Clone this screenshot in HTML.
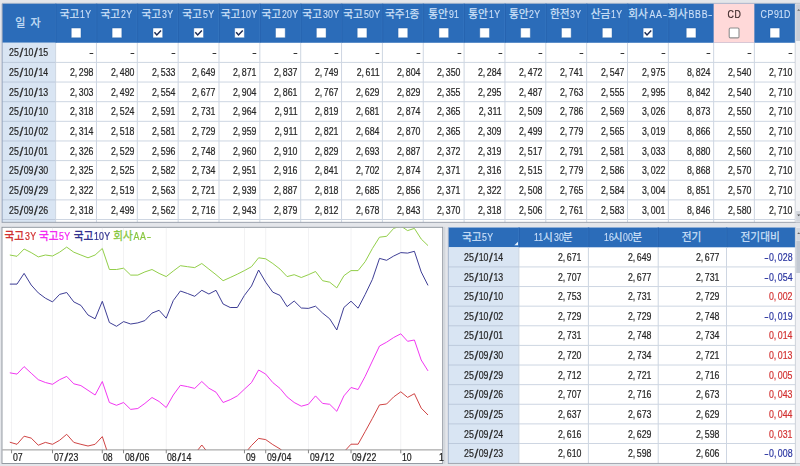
<!DOCTYPE html>
<html lang="ko"><head><meta charset="utf-8"><title>bond yields</title>
<style>
html,body{margin:0;padding:0}
body{width:800px;height:466px;overflow:hidden;position:relative;background:#E4E6EA;font-family:"Liberation Sans",sans-serif;}
#bg{position:absolute;left:0;top:0;display:block}
#tx{position:absolute;left:0;top:0;width:800px;height:466px;will-change:transform}
span{position:absolute;white-space:nowrap;line-height:12px;height:12px;font-size:11.0px;-webkit-text-stroke:0.22px}
.n{transform-origin:100% 50%;transform:scaleX(0.8);text-align:right}
.t{transform-origin:0 50%}
.hd{-webkit-text-stroke:0.1px}
i{font-style:normal;display:inline-block}
i.c{width:.45em;text-align:left}
i.s{width:.556em;text-align:center}
i.h{width:.556em;text-align:center}
i.hh{transform:scaleX(1.5)}
i.ss{transform:scale(1.55,1.14)}
i.u{padding:0 0.0475em}
svg text{font-family:"Liberation Sans","Noto Sans CJK KR",sans-serif;font-size:11px}
svg text.hh{fill:#CDE0F8;stroke:#CDE0F8;stroke-width:0.25}
</style></head>
<body>
<svg id="bg" width="800" height="466" viewBox="0 0 800 466">
<rect x="0.00" y="0.00" width="800.00" height="466.00" fill="#E4E6EA"/>
<rect x="2.20" y="2.90" width="797.80" height="0.80" fill="#9AA2AE"/>
<rect x="2.20" y="3.70" width="793.00" height="218.60" fill="#fff"/>
<rect x="2.20" y="3.70" width="793.00" height="39.06" fill="#2B6CB9"/>
<rect x="2.20" y="42.76" width="53.40" height="179.54" fill="#D9E5F3"/>
<rect x="713.65" y="3.70" width="40.70" height="39.06" fill="#FFD9D9"/>
<rect x="55.00" y="3.70" width="0.70" height="39.06" fill="#3777C1"/>
<rect x="55.70" y="3.70" width="0.70" height="39.06" fill="#2561AC"/>
<rect x="95.85" y="3.70" width="0.70" height="39.06" fill="#3777C1"/>
<rect x="96.55" y="3.70" width="0.70" height="39.06" fill="#2561AC"/>
<rect x="136.70" y="3.70" width="0.70" height="39.06" fill="#3777C1"/>
<rect x="137.40" y="3.70" width="0.70" height="39.06" fill="#2561AC"/>
<rect x="177.55" y="3.70" width="0.70" height="39.06" fill="#3777C1"/>
<rect x="178.25" y="3.70" width="0.70" height="39.06" fill="#2561AC"/>
<rect x="218.40" y="3.70" width="0.70" height="39.06" fill="#3777C1"/>
<rect x="219.10" y="3.70" width="0.70" height="39.06" fill="#2561AC"/>
<rect x="259.25" y="3.70" width="0.70" height="39.06" fill="#3777C1"/>
<rect x="259.95" y="3.70" width="0.70" height="39.06" fill="#2561AC"/>
<rect x="300.10" y="3.70" width="0.70" height="39.06" fill="#3777C1"/>
<rect x="300.80" y="3.70" width="0.70" height="39.06" fill="#2561AC"/>
<rect x="340.95" y="3.70" width="0.70" height="39.06" fill="#3777C1"/>
<rect x="341.65" y="3.70" width="0.70" height="39.06" fill="#2561AC"/>
<rect x="381.80" y="3.70" width="0.70" height="39.06" fill="#3777C1"/>
<rect x="382.50" y="3.70" width="0.70" height="39.06" fill="#2561AC"/>
<rect x="422.65" y="3.70" width="0.70" height="39.06" fill="#3777C1"/>
<rect x="423.35" y="3.70" width="0.70" height="39.06" fill="#2561AC"/>
<rect x="463.50" y="3.70" width="0.70" height="39.06" fill="#3777C1"/>
<rect x="464.20" y="3.70" width="0.70" height="39.06" fill="#2561AC"/>
<rect x="504.35" y="3.70" width="0.70" height="39.06" fill="#3777C1"/>
<rect x="505.05" y="3.70" width="0.70" height="39.06" fill="#2561AC"/>
<rect x="545.20" y="3.70" width="0.70" height="39.06" fill="#3777C1"/>
<rect x="545.90" y="3.70" width="0.70" height="39.06" fill="#2561AC"/>
<rect x="586.05" y="3.70" width="0.70" height="39.06" fill="#3777C1"/>
<rect x="586.75" y="3.70" width="0.70" height="39.06" fill="#2561AC"/>
<rect x="626.90" y="3.70" width="0.70" height="39.06" fill="#3777C1"/>
<rect x="627.60" y="3.70" width="0.70" height="39.06" fill="#2561AC"/>
<rect x="667.75" y="3.70" width="0.70" height="39.06" fill="#3777C1"/>
<rect x="668.45" y="3.70" width="0.70" height="39.06" fill="#2561AC"/>
<rect x="55.10" y="42.76" width="1.00" height="179.54" fill="#CED6E2"/>
<rect x="95.95" y="42.76" width="1.00" height="179.54" fill="#CED6E2"/>
<rect x="136.80" y="42.76" width="1.00" height="179.54" fill="#CED6E2"/>
<rect x="177.65" y="42.76" width="1.00" height="179.54" fill="#CED6E2"/>
<rect x="218.50" y="42.76" width="1.00" height="179.54" fill="#CED6E2"/>
<rect x="259.35" y="42.76" width="1.00" height="179.54" fill="#CED6E2"/>
<rect x="300.20" y="42.76" width="1.00" height="179.54" fill="#CED6E2"/>
<rect x="341.05" y="42.76" width="1.00" height="179.54" fill="#CED6E2"/>
<rect x="381.90" y="42.76" width="1.00" height="179.54" fill="#CED6E2"/>
<rect x="422.75" y="42.76" width="1.00" height="179.54" fill="#CED6E2"/>
<rect x="463.60" y="42.76" width="1.00" height="179.54" fill="#CED6E2"/>
<rect x="504.45" y="42.76" width="1.00" height="179.54" fill="#CED6E2"/>
<rect x="545.30" y="42.76" width="1.00" height="179.54" fill="#CED6E2"/>
<rect x="586.15" y="42.76" width="1.00" height="179.54" fill="#CED6E2"/>
<rect x="627.00" y="42.76" width="1.00" height="179.54" fill="#CED6E2"/>
<rect x="667.85" y="42.76" width="1.00" height="179.54" fill="#CED6E2"/>
<rect x="713.15" y="42.76" width="1.00" height="179.54" fill="#CED6E2"/>
<rect x="753.85" y="42.76" width="1.00" height="179.54" fill="#CED6E2"/>
<rect x="2.20" y="61.90" width="53.40" height="1.00" fill="#BDCADC"/>
<rect x="55.60" y="61.90" width="739.60" height="1.00" fill="#CED6E2"/>
<rect x="2.20" y="81.54" width="53.40" height="1.00" fill="#BDCADC"/>
<rect x="55.60" y="81.54" width="739.60" height="1.00" fill="#CED6E2"/>
<rect x="2.20" y="101.18" width="53.40" height="1.00" fill="#BDCADC"/>
<rect x="55.60" y="101.18" width="739.60" height="1.00" fill="#CED6E2"/>
<rect x="2.20" y="120.82" width="53.40" height="1.00" fill="#BDCADC"/>
<rect x="55.60" y="120.82" width="739.60" height="1.00" fill="#CED6E2"/>
<rect x="2.20" y="140.46" width="53.40" height="1.00" fill="#BDCADC"/>
<rect x="55.60" y="140.46" width="739.60" height="1.00" fill="#CED6E2"/>
<rect x="2.20" y="160.10" width="53.40" height="1.00" fill="#BDCADC"/>
<rect x="55.60" y="160.10" width="739.60" height="1.00" fill="#CED6E2"/>
<rect x="2.20" y="179.74" width="53.40" height="1.00" fill="#BDCADC"/>
<rect x="55.60" y="179.74" width="739.60" height="1.00" fill="#CED6E2"/>
<rect x="2.20" y="199.38" width="53.40" height="1.00" fill="#BDCADC"/>
<rect x="55.60" y="199.38" width="739.60" height="1.00" fill="#CED6E2"/>
<rect x="2.20" y="219.02" width="53.40" height="1.00" fill="#BDCADC"/>
<rect x="55.60" y="219.02" width="739.60" height="1.00" fill="#CED6E2"/>
<rect x="1.70" y="3.70" width="0.90" height="218.60" fill="#8E9DB6"/>
<rect x="1.70" y="221.85" width="798.30" height="0.90" fill="#939AA6"/>
<rect x="794.80" y="3.70" width="0.80" height="218.60" fill="#B9BFC9"/>
<rect x="795.60" y="3.70" width="4.40" height="218.60" fill="#F4F5F7"/>
<rect x="796.10" y="4.20" width="3.90" height="36.80" fill="#C9CED7"/>
<rect x="796.10" y="211.00" width="3.90" height="10.80" fill="#D3D7DE"/>
<path d="M797.2 214.5 h3 l-1.5 1.8z" fill="#555"/>
<path d="M797.2 10.8 h3 l-1.5 -1.8z" fill="#666"/>
<text class="hh" x="59.68" y="17.6" textLength="19.6" lengthAdjust="spacingAndGlyphs">국고</text>
<rect x="71.28" y="28.10" width="9.70" height="9.70" rx="0.6" fill="#fff" stroke="#1F5BA3" stroke-width="0.4"/>
<text class="hh" x="100.53" y="17.6" textLength="19.6" lengthAdjust="spacingAndGlyphs">국고</text>
<rect x="112.12" y="28.10" width="9.70" height="9.70" rx="0.6" fill="#fff" stroke="#1F5BA3" stroke-width="0.4"/>
<text class="hh" x="141.38" y="17.6" textLength="19.6" lengthAdjust="spacingAndGlyphs">국고</text>
<rect x="152.98" y="28.10" width="9.70" height="9.70" rx="0.6" fill="#fff" stroke="#1F5BA3" stroke-width="0.4"/>
<path d="M154.93 32.85 L156.83 34.95 L160.53 31.05" fill="none" stroke="#1B2B55" stroke-width="1.45" stroke-linecap="square" stroke-linejoin="miter"/>
<text class="hh" x="182.23" y="17.6" textLength="19.6" lengthAdjust="spacingAndGlyphs">국고</text>
<rect x="193.82" y="28.10" width="9.70" height="9.70" rx="0.6" fill="#fff" stroke="#1F5BA3" stroke-width="0.4"/>
<path d="M195.77 32.85 L197.67 34.95 L201.37 31.05" fill="none" stroke="#1B2B55" stroke-width="1.45" stroke-linecap="square" stroke-linejoin="miter"/>
<text class="hh" x="220.63" y="17.6" textLength="19.6" lengthAdjust="spacingAndGlyphs">국고</text>
<rect x="234.68" y="28.10" width="9.70" height="9.70" rx="0.6" fill="#fff" stroke="#1F5BA3" stroke-width="0.4"/>
<path d="M236.62 32.85 L238.53 34.95 L242.22 31.05" fill="none" stroke="#1B2B55" stroke-width="1.45" stroke-linecap="square" stroke-linejoin="miter"/>
<text class="hh" x="261.48" y="17.6" textLength="19.6" lengthAdjust="spacingAndGlyphs">국고</text>
<rect x="275.53" y="28.10" width="9.70" height="9.70" rx="0.6" fill="#fff" stroke="#1F5BA3" stroke-width="0.4"/>
<text class="hh" x="302.33" y="17.6" textLength="19.6" lengthAdjust="spacingAndGlyphs">국고</text>
<rect x="316.38" y="28.10" width="9.70" height="9.70" rx="0.6" fill="#fff" stroke="#1F5BA3" stroke-width="0.4"/>
<text class="hh" x="343.18" y="17.6" textLength="19.6" lengthAdjust="spacingAndGlyphs">국고</text>
<rect x="357.23" y="28.10" width="9.70" height="9.70" rx="0.6" fill="#fff" stroke="#1F5BA3" stroke-width="0.4"/>
<text class="hh" x="384.93" y="17.6" textLength="19.6" lengthAdjust="spacingAndGlyphs">국주</text>
<text class="hh" x="409.42" y="17.6" textLength="9.8" lengthAdjust="spacingAndGlyphs">종</text>
<rect x="398.08" y="28.10" width="9.70" height="9.70" rx="0.6" fill="#fff" stroke="#1F5BA3" stroke-width="0.4"/>
<text class="hh" x="428.23" y="17.6" textLength="19.6" lengthAdjust="spacingAndGlyphs">통안</text>
<rect x="438.93" y="28.10" width="9.70" height="9.70" rx="0.6" fill="#fff" stroke="#1F5BA3" stroke-width="0.4"/>
<text class="hh" x="468.18" y="17.6" textLength="19.6" lengthAdjust="spacingAndGlyphs">통안</text>
<rect x="479.78" y="28.10" width="9.70" height="9.70" rx="0.6" fill="#fff" stroke="#1F5BA3" stroke-width="0.4"/>
<text class="hh" x="509.03" y="17.6" textLength="19.6" lengthAdjust="spacingAndGlyphs">통안</text>
<rect x="520.62" y="28.10" width="9.70" height="9.70" rx="0.6" fill="#fff" stroke="#1F5BA3" stroke-width="0.4"/>
<text class="hh" x="549.88" y="17.6" textLength="19.6" lengthAdjust="spacingAndGlyphs">한전</text>
<rect x="561.48" y="28.10" width="9.70" height="9.70" rx="0.6" fill="#fff" stroke="#1F5BA3" stroke-width="0.4"/>
<text class="hh" x="590.73" y="17.6" textLength="19.6" lengthAdjust="spacingAndGlyphs">산금</text>
<rect x="602.33" y="28.10" width="9.70" height="9.70" rx="0.6" fill="#fff" stroke="#1F5BA3" stroke-width="0.4"/>
<text class="hh" x="628.22" y="17.6" textLength="19.6" lengthAdjust="spacingAndGlyphs">회사</text>
<rect x="643.17" y="28.10" width="9.70" height="9.70" rx="0.6" fill="#fff" stroke="#1F5BA3" stroke-width="0.4"/>
<path d="M645.12 32.85 L647.02 34.95 L650.73 31.05" fill="none" stroke="#1B2B55" stroke-width="1.45" stroke-linecap="square" stroke-linejoin="miter"/>
<text class="hh" x="667.95" y="17.6" textLength="19.6" lengthAdjust="spacingAndGlyphs">회사</text>
<rect x="686.25" y="28.10" width="9.70" height="9.70" rx="0.6" fill="#fff" stroke="#1F5BA3" stroke-width="0.4"/>
<rect x="729.20" y="28.05" width="9.80" height="9.80" rx="1.2" fill="#fff" stroke="#8E8E8E" stroke-width="1.1"/>
<rect x="770.03" y="28.10" width="9.70" height="9.70" rx="0.6" fill="#fff" stroke="#1F5BA3" stroke-width="0.4"/>
<text class="hh" x="15.25" y="27.4" textLength="25.4" lengthAdjust="spacing" xml:space="preserve">일 자</text>
<rect x="2.00" y="227.30" width="440.70" height="236.20" fill="#fff" stroke="#8C929B" stroke-width="0.9"/>
<rect x="443.20" y="226.90" width="2.10" height="237.00" fill="#D3D7DD"/>
<rect x="11.15" y="227.90" width="0.90" height="222.00" fill="#F0F0F2"/>
<rect x="52.05" y="227.90" width="0.90" height="222.00" fill="#F0F0F2"/>
<rect x="101.80" y="227.90" width="0.90" height="222.00" fill="#F0F0F2"/>
<rect x="123.13" y="227.90" width="0.90" height="222.00" fill="#F0F0F2"/>
<rect x="165.78" y="227.90" width="0.90" height="222.00" fill="#F0F0F2"/>
<rect x="243.96" y="227.90" width="0.90" height="222.00" fill="#F0F0F2"/>
<rect x="265.29" y="227.90" width="0.90" height="222.00" fill="#F0F0F2"/>
<rect x="307.94" y="227.90" width="0.90" height="222.00" fill="#F0F0F2"/>
<rect x="350.58" y="227.90" width="0.90" height="222.00" fill="#F0F0F2"/>
<rect x="400.34" y="227.90" width="0.90" height="222.00" fill="#F0F0F2"/>
<rect x="11.15" y="449.90" width="0.90" height="3.40" fill="#777"/>
<rect x="52.05" y="449.90" width="0.90" height="3.40" fill="#777"/>
<rect x="101.80" y="449.90" width="0.90" height="3.40" fill="#777"/>
<rect x="123.13" y="449.90" width="0.90" height="3.40" fill="#777"/>
<rect x="165.78" y="449.90" width="0.90" height="3.40" fill="#777"/>
<rect x="243.96" y="449.90" width="0.90" height="3.40" fill="#777"/>
<rect x="265.29" y="449.90" width="0.90" height="3.40" fill="#777"/>
<rect x="307.94" y="449.90" width="0.90" height="3.40" fill="#777"/>
<rect x="350.58" y="449.90" width="0.90" height="3.40" fill="#777"/>
<rect x="400.34" y="449.90" width="0.90" height="3.40" fill="#777"/>
<clipPath id="cc"><rect x="2.5" y="227.8" width="439.7" height="222.09999999999997"/></clipPath>
<polyline clip-path="url(#cc)" points="9.8,255.0 17.0,256.3 24.1,249.0 31.2,252.6 38.3,256.9 45.4,255.0 52.5,256.0 59.6,252.2 66.7,247.1 73.8,252.2 80.9,255.0 88.0,257.8 95.1,255.0 102.3,248.5 109.4,269.5 116.5,269.5 123.6,268.2 130.7,275.1 137.8,275.1 144.9,271.9 152.0,269.5 159.1,273.4 166.2,276.6 173.3,271.0 180.4,265.7 187.5,266.7 194.7,267.6 201.8,263.5 208.9,269.1 216.0,274.7 223.1,280.7 230.2,277.5 237.3,274.2 244.4,270.6 251.5,266.7 258.6,257.8 265.7,258.8 272.8,263.5 280.0,269.1 287.1,276.6 294.2,274.7 301.3,277.5 308.4,274.7 315.5,271.5 322.6,280.7 329.7,282.2 336.8,287.9 343.9,275.7 351.0,270.6 358.1,270.6 365.2,261.6 372.4,248.5 379.5,237.2 386.6,236.3 393.7,228.4 400.8,226.0 407.6,230.6 414.4,228.4 421.2,239.0 428.0,245.6" fill="none" stroke="#8CCB3F" stroke-width="0.95" stroke-linejoin="round"/>
<polyline clip-path="url(#cc)" points="9.8,284.1 17.0,284.1 24.1,273.4 31.2,285.0 38.3,292.9 45.4,298.2 52.5,301.9 59.6,294.4 66.7,292.5 73.8,301.9 80.9,305.4 88.0,315.0 95.1,318.8 102.3,301.3 109.4,322.5 116.5,326.3 123.6,321.6 130.7,324.0 137.8,322.9 144.9,320.6 152.0,313.1 159.1,310.3 166.2,318.2 173.3,300.5 180.4,291.0 187.5,293.5 194.7,296.3 201.8,290.3 208.9,294.0 216.0,290.3 223.1,304.0 230.2,307.5 237.3,307.5 244.4,295.4 251.5,286.0 258.6,270.0 265.7,282.2 272.8,292.2 280.0,295.4 287.1,306.6 294.2,301.0 301.3,308.0 308.4,308.4 315.5,306.2 322.6,313.1 329.7,318.8 336.8,330.0 343.9,307.5 351.0,301.2 358.1,308.2 365.2,294.4 372.4,279.4 379.5,258.4 386.6,260.3 393.7,256.0 400.8,252.6 407.6,253.1 414.4,251.3 421.2,271.9 428.0,285.4" fill="none" stroke="#34348F" stroke-width="0.95" stroke-linejoin="round"/>
<polyline clip-path="url(#cc)" points="9.8,372.8 17.0,374.1 24.1,366.6 31.2,373.2 38.3,379.7 45.4,382.5 52.5,384.3 59.6,379.7 66.7,376.4 73.8,383.8 80.9,385.6 88.0,390.3 95.1,395.0 102.3,381.5 109.4,402.5 116.5,405.3 123.6,402.5 130.7,409.4 137.8,408.5 144.9,403.4 152.0,397.5 159.1,401.5 166.2,407.5 173.3,395.0 180.4,385.3 187.5,386.6 194.7,388.4 201.8,381.5 208.9,388.2 216.0,392.2 223.1,402.5 230.2,399.7 237.3,395.9 244.4,389.2 251.5,382.6 258.6,370.0 265.7,374.1 272.8,382.6 280.0,388.4 287.1,396.9 294.2,402.5 301.3,406.2 308.4,404.3 315.5,395.9 322.6,403.4 329.7,404.3 336.8,411.3 343.9,395.9 351.0,387.5 358.1,389.5 365.2,376.3 372.4,361.0 379.5,346.0 386.6,342.2 393.7,337.5 400.8,333.8 407.6,341.3 414.4,340.0 421.2,360.0 428.0,370.9" fill="none" stroke="#F02CF0" stroke-width="0.95" stroke-linejoin="round"/>
<polyline clip-path="url(#cc)" points="9.8,442.2 17.0,444.3 24.1,436.2 31.2,438.1 38.3,445.2 45.4,442.4 52.5,444.3 59.6,440.3 66.7,434.3 73.8,442.4 80.9,444.3 88.0,446.0 95.1,444.3 102.3,436.6 109.4,458.0 116.5,458.0 123.6,458.0 130.7,458.0 137.8,458.0 144.9,458.0 152.0,458.0 159.1,458.0 166.2,458.0 173.3,458.0 180.4,458.0 187.5,458.0 194.7,454.0 201.8,445.0 208.9,454.0 216.0,458.0 223.1,458.0 230.2,458.0 237.3,458.0 244.4,454.0 251.5,445.5 258.6,438.4 265.7,439.6 272.8,444.6 280.0,448.9 287.1,455.0 294.2,458.0 301.3,458.0 308.4,458.0 315.5,458.0 322.6,458.0 329.7,458.0 336.8,458.0 343.9,452.0 351.0,444.2 358.1,444.2 365.2,431.5 372.4,418.4 379.5,404.9 386.6,404.0 393.7,396.9 400.8,391.8 407.6,397.4 414.4,393.7 421.2,408.1 428.0,415.0" fill="none" stroke="#CC3A3A" stroke-width="0.95" stroke-linejoin="round"/>
<rect x="2.40" y="449.45" width="439.90" height="0.90" fill="#8A8A8A"/>
<text x="4.45" y="239.7" textLength="19.6" lengthAdjust="spacingAndGlyphs" fill="#D02A2A" stroke="#D02A2A" stroke-width="0.3">국고</text>
<text x="39.05" y="239.7" textLength="19.6" lengthAdjust="spacingAndGlyphs" fill="#F31FF3" stroke="#F31FF3" stroke-width="0.3">국고</text>
<text x="73.65" y="239.7" textLength="19.6" lengthAdjust="spacingAndGlyphs" fill="#2B2B8C" stroke="#2B2B8C" stroke-width="0.3">국고</text>
<text x="113.14" y="239.7" textLength="19.6" lengthAdjust="spacingAndGlyphs" fill="#86C63C" stroke="#86C63C" stroke-width="0.3">회사</text>
<rect x="448.30" y="227.50" width="347.00" height="235.90" fill="#fff"/>
<rect x="448.30" y="227.50" width="347.00" height="19.80" fill="#2B6CB9"/>
<rect x="448.30" y="247.30" width="70.60" height="216.10" fill="#D9E5F3"/>
<rect x="518.30" y="227.50" width="0.70" height="19.80" fill="#3777C1"/>
<rect x="519.00" y="227.50" width="0.70" height="19.80" fill="#2561AC"/>
<rect x="518.40" y="247.30" width="1.00" height="216.10" fill="#CED6E2"/>
<rect x="587.80" y="227.50" width="0.70" height="19.80" fill="#3777C1"/>
<rect x="588.50" y="227.50" width="0.70" height="19.80" fill="#2561AC"/>
<rect x="587.90" y="247.30" width="1.00" height="216.10" fill="#CED6E2"/>
<rect x="657.60" y="227.50" width="0.70" height="19.80" fill="#3777C1"/>
<rect x="658.30" y="227.50" width="0.70" height="19.80" fill="#2561AC"/>
<rect x="657.70" y="247.30" width="1.00" height="216.10" fill="#CED6E2"/>
<rect x="725.90" y="227.50" width="0.70" height="19.80" fill="#3777C1"/>
<rect x="726.60" y="227.50" width="0.70" height="19.80" fill="#2561AC"/>
<rect x="726.00" y="247.30" width="1.00" height="216.10" fill="#CED6E2"/>
<rect x="448.30" y="266.42" width="70.60" height="1.00" fill="#BDCADC"/>
<rect x="518.90" y="266.42" width="276.40" height="1.00" fill="#CED6E2"/>
<rect x="448.30" y="286.04" width="70.60" height="1.00" fill="#BDCADC"/>
<rect x="518.90" y="286.04" width="276.40" height="1.00" fill="#CED6E2"/>
<rect x="448.30" y="305.66" width="70.60" height="1.00" fill="#BDCADC"/>
<rect x="518.90" y="305.66" width="276.40" height="1.00" fill="#CED6E2"/>
<rect x="448.30" y="325.28" width="70.60" height="1.00" fill="#BDCADC"/>
<rect x="518.90" y="325.28" width="276.40" height="1.00" fill="#CED6E2"/>
<rect x="448.30" y="344.90" width="70.60" height="1.00" fill="#BDCADC"/>
<rect x="518.90" y="344.90" width="276.40" height="1.00" fill="#CED6E2"/>
<rect x="448.30" y="364.52" width="70.60" height="1.00" fill="#BDCADC"/>
<rect x="518.90" y="364.52" width="276.40" height="1.00" fill="#CED6E2"/>
<rect x="448.30" y="384.14" width="70.60" height="1.00" fill="#BDCADC"/>
<rect x="518.90" y="384.14" width="276.40" height="1.00" fill="#CED6E2"/>
<rect x="448.30" y="403.76" width="70.60" height="1.00" fill="#BDCADC"/>
<rect x="518.90" y="403.76" width="276.40" height="1.00" fill="#CED6E2"/>
<rect x="448.30" y="423.38" width="70.60" height="1.00" fill="#BDCADC"/>
<rect x="518.90" y="423.38" width="276.40" height="1.00" fill="#CED6E2"/>
<rect x="448.30" y="443.00" width="70.60" height="1.00" fill="#BDCADC"/>
<rect x="518.90" y="443.00" width="276.40" height="1.00" fill="#CED6E2"/>
<rect x="447.85" y="227.50" width="0.90" height="235.90" fill="#9FB0C8"/>
<rect x="794.90" y="227.50" width="0.80" height="235.90" fill="#B9BFC9"/>
<rect x="447.90" y="462.95" width="352.10" height="0.90" fill="#9AA0AA"/>
<rect x="795.70" y="227.50" width="4.30" height="235.90" fill="#F1F2F5"/>
<rect x="796.20" y="227.90" width="3.80" height="12.10" fill="#D3D7DE"/>
<rect x="796.20" y="240.50" width="3.80" height="32.50" fill="#C3C9D3"/>
<path d="M797.2 234 h3 l-1.5 -1.8z" fill="#666"/>
<path d="M518.00 241.70 v3.5 h-3.6z" fill="#EAF4FF"/>
<text class="hh" x="461.95" y="241.3" textLength="19.6" lengthAdjust="spacingAndGlyphs">국고</text>
<text class="hh" x="543.10" y="241.3" textLength="9.8" lengthAdjust="spacingAndGlyphs">시</text>
<text class="hh" x="562.69" y="241.3" textLength="9.8" lengthAdjust="spacingAndGlyphs">분</text>
<text class="hh" x="612.75" y="241.3" textLength="9.8" lengthAdjust="spacingAndGlyphs">시</text>
<text class="hh" x="632.34" y="241.3" textLength="9.8" lengthAdjust="spacingAndGlyphs">분</text>
<text class="hh" x="681.80" y="241.3" textLength="19.6" lengthAdjust="spacingAndGlyphs">전기</text>
<text class="hh" x="740.55" y="241.3" textLength="39.2" lengthAdjust="spacingAndGlyphs">전기대비</text>
</svg>
<div id="tx">
<span class="t hd" style="left:80.03px;top:7.50px;color:#CDE0F8;font-size:11.0px;transform:scaleX(0.8)">1<i class="u">Y</i></span>
<span class="t hd" style="left:120.88px;top:7.50px;color:#CDE0F8;font-size:11.0px;transform:scaleX(0.8)">2<i class="u">Y</i></span>
<span class="t hd" style="left:161.73px;top:7.50px;color:#CDE0F8;font-size:11.0px;transform:scaleX(0.8)">3<i class="u">Y</i></span>
<span class="t hd" style="left:202.58px;top:7.50px;color:#CDE0F8;font-size:11.0px;transform:scaleX(0.8)">5<i class="u">Y</i></span>
<span class="t hd" style="left:240.98px;top:7.50px;color:#CDE0F8;font-size:11.0px;transform:scaleX(0.8)">10<i class="u">Y</i></span>
<span class="t hd" style="left:281.83px;top:7.50px;color:#CDE0F8;font-size:11.0px;transform:scaleX(0.8)">20<i class="u">Y</i></span>
<span class="t hd" style="left:322.68px;top:7.50px;color:#CDE0F8;font-size:11.0px;transform:scaleX(0.8)">30<i class="u">Y</i></span>
<span class="t hd" style="left:363.53px;top:7.50px;color:#CDE0F8;font-size:11.0px;transform:scaleX(0.8)">50<i class="u">Y</i></span>
<span class="t hd" style="left:405.28px;top:7.50px;color:#CDE0F8;font-size:11.0px;transform:scaleX(0.8)">1</span>
<span class="t hd" style="left:448.58px;top:7.50px;color:#CDE0F8;font-size:11.0px;transform:scaleX(0.8)">91</span>
<span class="t hd" style="left:488.53px;top:7.50px;color:#CDE0F8;font-size:11.0px;transform:scaleX(0.8)">1<i class="u">Y</i></span>
<span class="t hd" style="left:529.38px;top:7.50px;color:#CDE0F8;font-size:11.0px;transform:scaleX(0.8)">2<i class="u">Y</i></span>
<span class="t hd" style="left:570.23px;top:7.50px;color:#CDE0F8;font-size:11.0px;transform:scaleX(0.8)">3<i class="u">Y</i></span>
<span class="t hd" style="left:611.08px;top:7.50px;color:#CDE0F8;font-size:11.0px;transform:scaleX(0.8)">1<i class="u">Y</i></span>
<span class="t hd" style="left:648.57px;top:7.50px;color:#CDE0F8;font-size:11.0px;transform:scaleX(0.8)"><i class="u">A</i><i class="u">A</i><i class="h"><i class="hh">-</i></i></span>
<span class="t hd" style="left:688.30px;top:7.50px;color:#CDE0F8;font-size:11.0px;transform:scaleX(0.8)"><i class="u">B</i><i class="u">B</i><i class="u">B</i><i class="h"><i class="hh">-</i></i></span>
<span class="t" style="left:726.81px;top:7.50px;color:#3A2626;font-size:11.0px;transform:scaleX(0.8)"><i class="u">C</i><i class="u">D</i></span>
<span class="t hd" style="left:760.34px;top:7.50px;color:#CDE0F8;font-size:11.0px;transform:scaleX(0.8)"><i class="u">C</i><i class="u">P</i>91<i class="u">D</i></span>
<span class="t" style="left:9.40px;top:46.48px;color:#262626;font-size:11.0px;transform:scaleX(0.8)">25<i class="s"><i class="ss">/</i></i>10<i class="s"><i class="ss">/</i></i>15</span>
<span class="n" style="right:705.85px;top:45.98px;color:#262626"><i class="h"><i class="hh">-</i></i></span>
<span class="n" style="right:665.00px;top:45.98px;color:#262626"><i class="h"><i class="hh">-</i></i></span>
<span class="n" style="right:624.15px;top:45.98px;color:#262626"><i class="h"><i class="hh">-</i></i></span>
<span class="n" style="right:583.30px;top:45.98px;color:#262626"><i class="h"><i class="hh">-</i></i></span>
<span class="n" style="right:542.45px;top:45.98px;color:#262626"><i class="h"><i class="hh">-</i></i></span>
<span class="n" style="right:501.60px;top:45.98px;color:#262626"><i class="h"><i class="hh">-</i></i></span>
<span class="n" style="right:460.75px;top:45.98px;color:#262626"><i class="h"><i class="hh">-</i></i></span>
<span class="n" style="right:419.90px;top:45.98px;color:#262626"><i class="h"><i class="hh">-</i></i></span>
<span class="n" style="right:379.05px;top:45.98px;color:#262626"><i class="h"><i class="hh">-</i></i></span>
<span class="n" style="right:338.20px;top:45.98px;color:#262626"><i class="h"><i class="hh">-</i></i></span>
<span class="n" style="right:297.35px;top:45.98px;color:#262626"><i class="h"><i class="hh">-</i></i></span>
<span class="n" style="right:256.50px;top:45.98px;color:#262626"><i class="h"><i class="hh">-</i></i></span>
<span class="n" style="right:215.65px;top:45.98px;color:#262626"><i class="h"><i class="hh">-</i></i></span>
<span class="n" style="right:174.80px;top:45.98px;color:#262626"><i class="h"><i class="hh">-</i></i></span>
<span class="n" style="right:133.95px;top:45.98px;color:#262626"><i class="h"><i class="hh">-</i></i></span>
<span class="n" style="right:88.65px;top:45.98px;color:#262626"><i class="h"><i class="hh">-</i></i></span>
<span class="n" style="right:47.95px;top:45.98px;color:#262626"><i class="h"><i class="hh">-</i></i></span>
<span class="n" style="right:7.10px;top:45.98px;color:#262626"><i class="h"><i class="hh">-</i></i></span>
<span class="t" style="left:9.40px;top:66.12px;color:#262626;font-size:11.0px;transform:scaleX(0.8)">25<i class="s"><i class="ss">/</i></i>10<i class="s"><i class="ss">/</i></i>14</span>
<span class="n" style="right:706.75px;top:66.12px;color:#262626">2<i class="c">,</i>298</span>
<span class="n" style="right:665.90px;top:66.12px;color:#262626">2<i class="c">,</i>480</span>
<span class="n" style="right:625.05px;top:66.12px;color:#262626">2<i class="c">,</i>533</span>
<span class="n" style="right:584.20px;top:66.12px;color:#262626">2<i class="c">,</i>649</span>
<span class="n" style="right:543.35px;top:66.12px;color:#262626">2<i class="c">,</i>871</span>
<span class="n" style="right:502.50px;top:66.12px;color:#262626">2<i class="c">,</i>837</span>
<span class="n" style="right:461.65px;top:66.12px;color:#262626">2<i class="c">,</i>749</span>
<span class="n" style="right:420.80px;top:66.12px;color:#262626">2<i class="c">,</i>611</span>
<span class="n" style="right:379.95px;top:66.12px;color:#262626">2<i class="c">,</i>804</span>
<span class="n" style="right:339.10px;top:66.12px;color:#262626">2<i class="c">,</i>350</span>
<span class="n" style="right:298.25px;top:66.12px;color:#262626">2<i class="c">,</i>284</span>
<span class="n" style="right:257.40px;top:66.12px;color:#262626">2<i class="c">,</i>472</span>
<span class="n" style="right:216.55px;top:66.12px;color:#262626">2<i class="c">,</i>741</span>
<span class="n" style="right:175.70px;top:66.12px;color:#262626">2<i class="c">,</i>547</span>
<span class="n" style="right:134.85px;top:66.12px;color:#262626">2<i class="c">,</i>975</span>
<span class="n" style="right:89.55px;top:66.12px;color:#262626">8<i class="c">,</i>824</span>
<span class="n" style="right:48.85px;top:66.12px;color:#262626">2<i class="c">,</i>540</span>
<span class="n" style="right:8.00px;top:66.12px;color:#262626">2<i class="c">,</i>710</span>
<span class="t" style="left:9.40px;top:85.76px;color:#262626;font-size:11.0px;transform:scaleX(0.8)">25<i class="s"><i class="ss">/</i></i>10<i class="s"><i class="ss">/</i></i>13</span>
<span class="n" style="right:706.75px;top:85.76px;color:#262626">2<i class="c">,</i>303</span>
<span class="n" style="right:665.90px;top:85.76px;color:#262626">2<i class="c">,</i>492</span>
<span class="n" style="right:625.05px;top:85.76px;color:#262626">2<i class="c">,</i>554</span>
<span class="n" style="right:584.20px;top:85.76px;color:#262626">2<i class="c">,</i>677</span>
<span class="n" style="right:543.35px;top:85.76px;color:#262626">2<i class="c">,</i>904</span>
<span class="n" style="right:502.50px;top:85.76px;color:#262626">2<i class="c">,</i>861</span>
<span class="n" style="right:461.65px;top:85.76px;color:#262626">2<i class="c">,</i>767</span>
<span class="n" style="right:420.80px;top:85.76px;color:#262626">2<i class="c">,</i>629</span>
<span class="n" style="right:379.95px;top:85.76px;color:#262626">2<i class="c">,</i>829</span>
<span class="n" style="right:339.10px;top:85.76px;color:#262626">2<i class="c">,</i>355</span>
<span class="n" style="right:298.25px;top:85.76px;color:#262626">2<i class="c">,</i>295</span>
<span class="n" style="right:257.40px;top:85.76px;color:#262626">2<i class="c">,</i>487</span>
<span class="n" style="right:216.55px;top:85.76px;color:#262626">2<i class="c">,</i>763</span>
<span class="n" style="right:175.70px;top:85.76px;color:#262626">2<i class="c">,</i>555</span>
<span class="n" style="right:134.85px;top:85.76px;color:#262626">2<i class="c">,</i>995</span>
<span class="n" style="right:89.55px;top:85.76px;color:#262626">8<i class="c">,</i>842</span>
<span class="n" style="right:48.85px;top:85.76px;color:#262626">2<i class="c">,</i>540</span>
<span class="n" style="right:8.00px;top:85.76px;color:#262626">2<i class="c">,</i>710</span>
<span class="t" style="left:9.40px;top:105.40px;color:#262626;font-size:11.0px;transform:scaleX(0.8)">25<i class="s"><i class="ss">/</i></i>10<i class="s"><i class="ss">/</i></i>10</span>
<span class="n" style="right:706.75px;top:105.40px;color:#262626">2<i class="c">,</i>318</span>
<span class="n" style="right:665.90px;top:105.40px;color:#262626">2<i class="c">,</i>524</span>
<span class="n" style="right:625.05px;top:105.40px;color:#262626">2<i class="c">,</i>591</span>
<span class="n" style="right:584.20px;top:105.40px;color:#262626">2<i class="c">,</i>731</span>
<span class="n" style="right:543.35px;top:105.40px;color:#262626">2<i class="c">,</i>964</span>
<span class="n" style="right:502.50px;top:105.40px;color:#262626">2<i class="c">,</i>911</span>
<span class="n" style="right:461.65px;top:105.40px;color:#262626">2<i class="c">,</i>819</span>
<span class="n" style="right:420.80px;top:105.40px;color:#262626">2<i class="c">,</i>681</span>
<span class="n" style="right:379.95px;top:105.40px;color:#262626">2<i class="c">,</i>874</span>
<span class="n" style="right:339.10px;top:105.40px;color:#262626">2<i class="c">,</i>365</span>
<span class="n" style="right:298.25px;top:105.40px;color:#262626">2<i class="c">,</i>311</span>
<span class="n" style="right:257.40px;top:105.40px;color:#262626">2<i class="c">,</i>509</span>
<span class="n" style="right:216.55px;top:105.40px;color:#262626">2<i class="c">,</i>786</span>
<span class="n" style="right:175.70px;top:105.40px;color:#262626">2<i class="c">,</i>569</span>
<span class="n" style="right:134.85px;top:105.40px;color:#262626">3<i class="c">,</i>026</span>
<span class="n" style="right:89.55px;top:105.40px;color:#262626">8<i class="c">,</i>873</span>
<span class="n" style="right:48.85px;top:105.40px;color:#262626">2<i class="c">,</i>550</span>
<span class="n" style="right:8.00px;top:105.40px;color:#262626">2<i class="c">,</i>710</span>
<span class="t" style="left:9.40px;top:125.04px;color:#262626;font-size:11.0px;transform:scaleX(0.8)">25<i class="s"><i class="ss">/</i></i>10<i class="s"><i class="ss">/</i></i>02</span>
<span class="n" style="right:706.75px;top:125.04px;color:#262626">2<i class="c">,</i>314</span>
<span class="n" style="right:665.90px;top:125.04px;color:#262626">2<i class="c">,</i>518</span>
<span class="n" style="right:625.05px;top:125.04px;color:#262626">2<i class="c">,</i>581</span>
<span class="n" style="right:584.20px;top:125.04px;color:#262626">2<i class="c">,</i>729</span>
<span class="n" style="right:543.35px;top:125.04px;color:#262626">2<i class="c">,</i>959</span>
<span class="n" style="right:502.50px;top:125.04px;color:#262626">2<i class="c">,</i>911</span>
<span class="n" style="right:461.65px;top:125.04px;color:#262626">2<i class="c">,</i>821</span>
<span class="n" style="right:420.80px;top:125.04px;color:#262626">2<i class="c">,</i>684</span>
<span class="n" style="right:379.95px;top:125.04px;color:#262626">2<i class="c">,</i>870</span>
<span class="n" style="right:339.10px;top:125.04px;color:#262626">2<i class="c">,</i>365</span>
<span class="n" style="right:298.25px;top:125.04px;color:#262626">2<i class="c">,</i>309</span>
<span class="n" style="right:257.40px;top:125.04px;color:#262626">2<i class="c">,</i>499</span>
<span class="n" style="right:216.55px;top:125.04px;color:#262626">2<i class="c">,</i>779</span>
<span class="n" style="right:175.70px;top:125.04px;color:#262626">2<i class="c">,</i>565</span>
<span class="n" style="right:134.85px;top:125.04px;color:#262626">3<i class="c">,</i>019</span>
<span class="n" style="right:89.55px;top:125.04px;color:#262626">8<i class="c">,</i>866</span>
<span class="n" style="right:48.85px;top:125.04px;color:#262626">2<i class="c">,</i>550</span>
<span class="n" style="right:8.00px;top:125.04px;color:#262626">2<i class="c">,</i>710</span>
<span class="t" style="left:9.40px;top:144.68px;color:#262626;font-size:11.0px;transform:scaleX(0.8)">25<i class="s"><i class="ss">/</i></i>10<i class="s"><i class="ss">/</i></i>01</span>
<span class="n" style="right:706.75px;top:144.68px;color:#262626">2<i class="c">,</i>326</span>
<span class="n" style="right:665.90px;top:144.68px;color:#262626">2<i class="c">,</i>529</span>
<span class="n" style="right:625.05px;top:144.68px;color:#262626">2<i class="c">,</i>596</span>
<span class="n" style="right:584.20px;top:144.68px;color:#262626">2<i class="c">,</i>748</span>
<span class="n" style="right:543.35px;top:144.68px;color:#262626">2<i class="c">,</i>960</span>
<span class="n" style="right:502.50px;top:144.68px;color:#262626">2<i class="c">,</i>910</span>
<span class="n" style="right:461.65px;top:144.68px;color:#262626">2<i class="c">,</i>829</span>
<span class="n" style="right:420.80px;top:144.68px;color:#262626">2<i class="c">,</i>693</span>
<span class="n" style="right:379.95px;top:144.68px;color:#262626">2<i class="c">,</i>887</span>
<span class="n" style="right:339.10px;top:144.68px;color:#262626">2<i class="c">,</i>372</span>
<span class="n" style="right:298.25px;top:144.68px;color:#262626">2<i class="c">,</i>319</span>
<span class="n" style="right:257.40px;top:144.68px;color:#262626">2<i class="c">,</i>517</span>
<span class="n" style="right:216.55px;top:144.68px;color:#262626">2<i class="c">,</i>791</span>
<span class="n" style="right:175.70px;top:144.68px;color:#262626">2<i class="c">,</i>581</span>
<span class="n" style="right:134.85px;top:144.68px;color:#262626">3<i class="c">,</i>033</span>
<span class="n" style="right:89.55px;top:144.68px;color:#262626">8<i class="c">,</i>880</span>
<span class="n" style="right:48.85px;top:144.68px;color:#262626">2<i class="c">,</i>560</span>
<span class="n" style="right:8.00px;top:144.68px;color:#262626">2<i class="c">,</i>710</span>
<span class="t" style="left:9.40px;top:164.32px;color:#262626;font-size:11.0px;transform:scaleX(0.8)">25<i class="s"><i class="ss">/</i></i>09<i class="s"><i class="ss">/</i></i>30</span>
<span class="n" style="right:706.75px;top:164.32px;color:#262626">2<i class="c">,</i>325</span>
<span class="n" style="right:665.90px;top:164.32px;color:#262626">2<i class="c">,</i>525</span>
<span class="n" style="right:625.05px;top:164.32px;color:#262626">2<i class="c">,</i>582</span>
<span class="n" style="right:584.20px;top:164.32px;color:#262626">2<i class="c">,</i>734</span>
<span class="n" style="right:543.35px;top:164.32px;color:#262626">2<i class="c">,</i>951</span>
<span class="n" style="right:502.50px;top:164.32px;color:#262626">2<i class="c">,</i>916</span>
<span class="n" style="right:461.65px;top:164.32px;color:#262626">2<i class="c">,</i>841</span>
<span class="n" style="right:420.80px;top:164.32px;color:#262626">2<i class="c">,</i>702</span>
<span class="n" style="right:379.95px;top:164.32px;color:#262626">2<i class="c">,</i>874</span>
<span class="n" style="right:339.10px;top:164.32px;color:#262626">2<i class="c">,</i>371</span>
<span class="n" style="right:298.25px;top:164.32px;color:#262626">2<i class="c">,</i>316</span>
<span class="n" style="right:257.40px;top:164.32px;color:#262626">2<i class="c">,</i>515</span>
<span class="n" style="right:216.55px;top:164.32px;color:#262626">2<i class="c">,</i>779</span>
<span class="n" style="right:175.70px;top:164.32px;color:#262626">2<i class="c">,</i>586</span>
<span class="n" style="right:134.85px;top:164.32px;color:#262626">3<i class="c">,</i>022</span>
<span class="n" style="right:89.55px;top:164.32px;color:#262626">8<i class="c">,</i>868</span>
<span class="n" style="right:48.85px;top:164.32px;color:#262626">2<i class="c">,</i>570</span>
<span class="n" style="right:8.00px;top:164.32px;color:#262626">2<i class="c">,</i>710</span>
<span class="t" style="left:9.40px;top:183.96px;color:#262626;font-size:11.0px;transform:scaleX(0.8)">25<i class="s"><i class="ss">/</i></i>09<i class="s"><i class="ss">/</i></i>29</span>
<span class="n" style="right:706.75px;top:183.96px;color:#262626">2<i class="c">,</i>322</span>
<span class="n" style="right:665.90px;top:183.96px;color:#262626">2<i class="c">,</i>519</span>
<span class="n" style="right:625.05px;top:183.96px;color:#262626">2<i class="c">,</i>563</span>
<span class="n" style="right:584.20px;top:183.96px;color:#262626">2<i class="c">,</i>721</span>
<span class="n" style="right:543.35px;top:183.96px;color:#262626">2<i class="c">,</i>939</span>
<span class="n" style="right:502.50px;top:183.96px;color:#262626">2<i class="c">,</i>887</span>
<span class="n" style="right:461.65px;top:183.96px;color:#262626">2<i class="c">,</i>818</span>
<span class="n" style="right:420.80px;top:183.96px;color:#262626">2<i class="c">,</i>685</span>
<span class="n" style="right:379.95px;top:183.96px;color:#262626">2<i class="c">,</i>856</span>
<span class="n" style="right:339.10px;top:183.96px;color:#262626">2<i class="c">,</i>371</span>
<span class="n" style="right:298.25px;top:183.96px;color:#262626">2<i class="c">,</i>322</span>
<span class="n" style="right:257.40px;top:183.96px;color:#262626">2<i class="c">,</i>508</span>
<span class="n" style="right:216.55px;top:183.96px;color:#262626">2<i class="c">,</i>765</span>
<span class="n" style="right:175.70px;top:183.96px;color:#262626">2<i class="c">,</i>584</span>
<span class="n" style="right:134.85px;top:183.96px;color:#262626">3<i class="c">,</i>004</span>
<span class="n" style="right:89.55px;top:183.96px;color:#262626">8<i class="c">,</i>851</span>
<span class="n" style="right:48.85px;top:183.96px;color:#262626">2<i class="c">,</i>570</span>
<span class="n" style="right:8.00px;top:183.96px;color:#262626">2<i class="c">,</i>710</span>
<span class="t" style="left:9.40px;top:203.60px;color:#262626;font-size:11.0px;transform:scaleX(0.8)">25<i class="s"><i class="ss">/</i></i>09<i class="s"><i class="ss">/</i></i>26</span>
<span class="n" style="right:706.75px;top:203.60px;color:#262626">2<i class="c">,</i>318</span>
<span class="n" style="right:665.90px;top:203.60px;color:#262626">2<i class="c">,</i>499</span>
<span class="n" style="right:625.05px;top:203.60px;color:#262626">2<i class="c">,</i>562</span>
<span class="n" style="right:584.20px;top:203.60px;color:#262626">2<i class="c">,</i>716</span>
<span class="n" style="right:543.35px;top:203.60px;color:#262626">2<i class="c">,</i>943</span>
<span class="n" style="right:502.50px;top:203.60px;color:#262626">2<i class="c">,</i>879</span>
<span class="n" style="right:461.65px;top:203.60px;color:#262626">2<i class="c">,</i>812</span>
<span class="n" style="right:420.80px;top:203.60px;color:#262626">2<i class="c">,</i>678</span>
<span class="n" style="right:379.95px;top:203.60px;color:#262626">2<i class="c">,</i>843</span>
<span class="n" style="right:339.10px;top:203.60px;color:#262626">2<i class="c">,</i>370</span>
<span class="n" style="right:298.25px;top:203.60px;color:#262626">2<i class="c">,</i>318</span>
<span class="n" style="right:257.40px;top:203.60px;color:#262626">2<i class="c">,</i>506</span>
<span class="n" style="right:216.55px;top:203.60px;color:#262626">2<i class="c">,</i>761</span>
<span class="n" style="right:175.70px;top:203.60px;color:#262626">2<i class="c">,</i>583</span>
<span class="n" style="right:134.85px;top:203.60px;color:#262626">3<i class="c">,</i>001</span>
<span class="n" style="right:89.55px;top:203.60px;color:#262626">8<i class="c">,</i>846</span>
<span class="n" style="right:48.85px;top:203.60px;color:#262626">2<i class="c">,</i>580</span>
<span class="n" style="right:8.00px;top:203.60px;color:#262626">2<i class="c">,</i>710</span>
<span class="t" style="left:12.80px;top:451.60px;color:#222;font-size:10.2px;transform:scaleX(0.855)">07</span>
<span class="t" style="left:53.70px;top:451.60px;color:#222;font-size:10.2px;transform:scaleX(0.855)">07<i class="s"><i class="ss">/</i></i>23</span>
<span class="t" style="left:103.45px;top:451.60px;color:#222;font-size:10.2px;transform:scaleX(0.855)">08</span>
<span class="t" style="left:124.78px;top:451.60px;color:#222;font-size:10.2px;transform:scaleX(0.855)">08<i class="s"><i class="ss">/</i></i>06</span>
<span class="t" style="left:167.43px;top:451.60px;color:#222;font-size:10.2px;transform:scaleX(0.855)">08<i class="s"><i class="ss">/</i></i>14</span>
<span class="t" style="left:245.61px;top:451.60px;color:#222;font-size:10.2px;transform:scaleX(0.855)">09</span>
<span class="t" style="left:266.94px;top:451.60px;color:#222;font-size:10.2px;transform:scaleX(0.855)">09<i class="s"><i class="ss">/</i></i>04</span>
<span class="t" style="left:309.59px;top:451.60px;color:#222;font-size:10.2px;transform:scaleX(0.855)">09<i class="s"><i class="ss">/</i></i>12</span>
<span class="t" style="left:352.23px;top:451.60px;color:#222;font-size:10.2px;transform:scaleX(0.855)">09<i class="s"><i class="ss">/</i></i>22</span>
<span class="t" style="left:401.99px;top:451.60px;color:#222;font-size:10.2px;transform:scaleX(0.855)">10</span>
<span class="t" style="left:438.50px;top:451.60px;color:#222;font-size:10.2px;transform:scaleX(0.855)">1</span>
<span class="t" style="left:24.80px;top:229.60px;color:#D02A2A;font-size:11.0px;transform:scaleX(0.8)">3<i class="u">Y</i></span>
<span class="t" style="left:59.40px;top:229.60px;color:#F31FF3;font-size:11.0px;transform:scaleX(0.8)">5<i class="u">Y</i></span>
<span class="t" style="left:94.00px;top:229.60px;color:#2B2B8C;font-size:11.0px;transform:scaleX(0.8)">10<i class="u">Y</i></span>
<span class="t" style="left:133.49px;top:229.60px;color:#86C63C;font-size:11.0px;transform:scaleX(0.8)"><i class="u">A</i><i class="u">A</i><i class="h"><i class="hh">-</i></i></span>
<span class="t hd" style="left:482.30px;top:231.20px;color:#CDE0F8;font-size:11.0px;transform:scaleX(0.8)">5<i class="u">Y</i></span>
<span class="t hd" style="left:534.06px;top:231.20px;color:#CDE0F8;font-size:11.0px;transform:scaleX(0.8)">11</span>
<span class="t hd" style="left:553.65px;top:231.20px;color:#CDE0F8;font-size:11.0px;transform:scaleX(0.8)">30</span>
<span class="t hd" style="left:603.71px;top:231.20px;color:#CDE0F8;font-size:11.0px;transform:scaleX(0.8)">16</span>
<span class="t hd" style="left:623.30px;top:231.20px;color:#CDE0F8;font-size:11.0px;transform:scaleX(0.8)">00</span>
<span class="t" style="left:464.02px;top:251.01px;color:#262626;font-size:11.0px;transform:scaleX(0.8)">25<i class="s"><i class="ss">/</i></i>10<i class="s"><i class="ss">/</i></i>14</span>
<span class="n" style="right:218.30px;top:251.01px;color:#262626">2<i class="c">,</i>671</span>
<span class="n" style="right:148.50px;top:251.01px;color:#262626">2<i class="c">,</i>649</span>
<span class="n" style="right:80.20px;top:251.01px;color:#262626">2<i class="c">,</i>677</span>
<span class="n" style="right:7.60px;top:251.01px;color:#2A35A0"><i class="h"><i class="hh">-</i></i>0<i class="c">,</i>028</span>
<span class="t" style="left:464.02px;top:270.63px;color:#262626;font-size:11.0px;transform:scaleX(0.8)">25<i class="s"><i class="ss">/</i></i>10<i class="s"><i class="ss">/</i></i>13</span>
<span class="n" style="right:218.30px;top:270.63px;color:#262626">2<i class="c">,</i>707</span>
<span class="n" style="right:148.50px;top:270.63px;color:#262626">2<i class="c">,</i>677</span>
<span class="n" style="right:80.20px;top:270.63px;color:#262626">2<i class="c">,</i>731</span>
<span class="n" style="right:7.60px;top:270.63px;color:#2A35A0"><i class="h"><i class="hh">-</i></i>0<i class="c">,</i>054</span>
<span class="t" style="left:464.02px;top:290.25px;color:#262626;font-size:11.0px;transform:scaleX(0.8)">25<i class="s"><i class="ss">/</i></i>10<i class="s"><i class="ss">/</i></i>10</span>
<span class="n" style="right:218.30px;top:290.25px;color:#262626">2<i class="c">,</i>753</span>
<span class="n" style="right:148.50px;top:290.25px;color:#262626">2<i class="c">,</i>731</span>
<span class="n" style="right:80.20px;top:290.25px;color:#262626">2<i class="c">,</i>729</span>
<span class="n" style="right:7.60px;top:290.25px;color:#D23232">0<i class="c">,</i>002</span>
<span class="t" style="left:464.02px;top:309.87px;color:#262626;font-size:11.0px;transform:scaleX(0.8)">25<i class="s"><i class="ss">/</i></i>10<i class="s"><i class="ss">/</i></i>02</span>
<span class="n" style="right:218.30px;top:309.87px;color:#262626">2<i class="c">,</i>729</span>
<span class="n" style="right:148.50px;top:309.87px;color:#262626">2<i class="c">,</i>729</span>
<span class="n" style="right:80.20px;top:309.87px;color:#262626">2<i class="c">,</i>748</span>
<span class="n" style="right:7.60px;top:309.87px;color:#2A35A0"><i class="h"><i class="hh">-</i></i>0<i class="c">,</i>019</span>
<span class="t" style="left:464.02px;top:329.49px;color:#262626;font-size:11.0px;transform:scaleX(0.8)">25<i class="s"><i class="ss">/</i></i>10<i class="s"><i class="ss">/</i></i>01</span>
<span class="n" style="right:218.30px;top:329.49px;color:#262626">2<i class="c">,</i>731</span>
<span class="n" style="right:148.50px;top:329.49px;color:#262626">2<i class="c">,</i>748</span>
<span class="n" style="right:80.20px;top:329.49px;color:#262626">2<i class="c">,</i>734</span>
<span class="n" style="right:7.60px;top:329.49px;color:#D23232">0<i class="c">,</i>014</span>
<span class="t" style="left:464.02px;top:349.11px;color:#262626;font-size:11.0px;transform:scaleX(0.8)">25<i class="s"><i class="ss">/</i></i>09<i class="s"><i class="ss">/</i></i>30</span>
<span class="n" style="right:218.30px;top:349.11px;color:#262626">2<i class="c">,</i>720</span>
<span class="n" style="right:148.50px;top:349.11px;color:#262626">2<i class="c">,</i>734</span>
<span class="n" style="right:80.20px;top:349.11px;color:#262626">2<i class="c">,</i>721</span>
<span class="n" style="right:7.60px;top:349.11px;color:#D23232">0<i class="c">,</i>013</span>
<span class="t" style="left:464.02px;top:368.73px;color:#262626;font-size:11.0px;transform:scaleX(0.8)">25<i class="s"><i class="ss">/</i></i>09<i class="s"><i class="ss">/</i></i>29</span>
<span class="n" style="right:218.30px;top:368.73px;color:#262626">2<i class="c">,</i>712</span>
<span class="n" style="right:148.50px;top:368.73px;color:#262626">2<i class="c">,</i>721</span>
<span class="n" style="right:80.20px;top:368.73px;color:#262626">2<i class="c">,</i>716</span>
<span class="n" style="right:7.60px;top:368.73px;color:#D23232">0<i class="c">,</i>005</span>
<span class="t" style="left:464.02px;top:388.35px;color:#262626;font-size:11.0px;transform:scaleX(0.8)">25<i class="s"><i class="ss">/</i></i>09<i class="s"><i class="ss">/</i></i>26</span>
<span class="n" style="right:218.30px;top:388.35px;color:#262626">2<i class="c">,</i>707</span>
<span class="n" style="right:148.50px;top:388.35px;color:#262626">2<i class="c">,</i>716</span>
<span class="n" style="right:80.20px;top:388.35px;color:#262626">2<i class="c">,</i>673</span>
<span class="n" style="right:7.60px;top:388.35px;color:#D23232">0<i class="c">,</i>043</span>
<span class="t" style="left:464.02px;top:407.97px;color:#262626;font-size:11.0px;transform:scaleX(0.8)">25<i class="s"><i class="ss">/</i></i>09<i class="s"><i class="ss">/</i></i>25</span>
<span class="n" style="right:218.30px;top:407.97px;color:#262626">2<i class="c">,</i>637</span>
<span class="n" style="right:148.50px;top:407.97px;color:#262626">2<i class="c">,</i>673</span>
<span class="n" style="right:80.20px;top:407.97px;color:#262626">2<i class="c">,</i>629</span>
<span class="n" style="right:7.60px;top:407.97px;color:#D23232">0<i class="c">,</i>044</span>
<span class="t" style="left:464.02px;top:427.59px;color:#262626;font-size:11.0px;transform:scaleX(0.8)">25<i class="s"><i class="ss">/</i></i>09<i class="s"><i class="ss">/</i></i>24</span>
<span class="n" style="right:218.30px;top:427.59px;color:#262626">2<i class="c">,</i>616</span>
<span class="n" style="right:148.50px;top:427.59px;color:#262626">2<i class="c">,</i>629</span>
<span class="n" style="right:80.20px;top:427.59px;color:#262626">2<i class="c">,</i>598</span>
<span class="n" style="right:7.60px;top:427.59px;color:#D23232">0<i class="c">,</i>031</span>
<span class="t" style="left:464.02px;top:447.21px;color:#262626;font-size:11.0px;transform:scaleX(0.8)">25<i class="s"><i class="ss">/</i></i>09<i class="s"><i class="ss">/</i></i>23</span>
<span class="n" style="right:218.30px;top:447.21px;color:#262626">2<i class="c">,</i>610</span>
<span class="n" style="right:148.50px;top:447.21px;color:#262626">2<i class="c">,</i>598</span>
<span class="n" style="right:80.20px;top:447.21px;color:#262626">2<i class="c">,</i>606</span>
<span class="n" style="right:7.60px;top:447.21px;color:#2A35A0"><i class="h"><i class="hh">-</i></i>0<i class="c">,</i>008</span>
</div>
</body></html>
